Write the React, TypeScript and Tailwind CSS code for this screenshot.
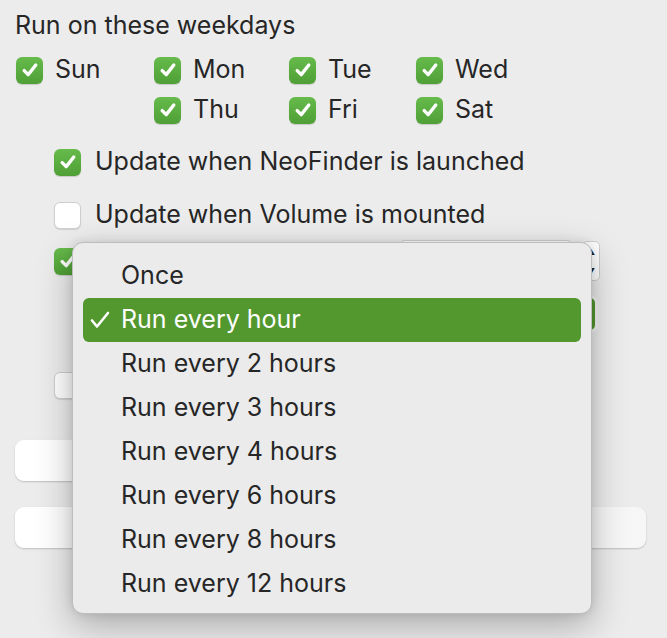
import React from "react";

const font = { fontFamily: 'Inter, "Noto Sans", sans-serif' };

function Check({ on = true }: { on?: boolean }) {
  if (!on) {
    return (
      <div className="w-[27px] h-[27px] rounded-[6px] bg-white border border-[#cfcfcf] shadow-[0_1px_1px_rgba(0,0,0,0.12)] shrink-0" />
    );
  }
  return (
    <div className="w-[27px] h-[27px] rounded-[6px] bg-gradient-to-b from-[#66bb4b] to-[#4f9f36] shadow-[0_1px_1px_rgba(0,0,0,0.15)] flex items-center justify-center shrink-0">
      <svg width="18" height="18" viewBox="0 0 18 18" fill="none">
        <path d="M3.2 9.6 L7.2 13.6 L14.8 4" stroke="white" strokeWidth="3.4" strokeLinecap="round" strokeLinejoin="round" />
      </svg>
    </div>
  );
}

function Day({ label }: { label: string }) {
  return (
    <div className="flex items-center gap-[12px] h-[40px]">
      <Check />
      <span>{label}</span>
    </div>
  );
}

export default function App() {
  const items = [
    "Once",
    "Run every hour",
    "Run every 2 hours",
    "Run every 3 hours",
    "Run every 4 hours",
    "Run every 6 hours",
    "Run every 8 hours",
    "Run every 12 hours",
  ];
  return (
    <div
      className="relative w-[667px] h-[638px] bg-[#ececec] text-[#262626] text-[25px] overflow-hidden"
      style={font}
    >
      <div className="pl-[15px] pt-[9px]">
        <div className="h-[32px] leading-[32px]">Run on these weekdays</div>
        <div className="grid grid-cols-[138px_135px_127px_auto] pl-[1px] mt-[9px]">
          <Day label="Sun" />
          <Day label="Mon" />
          <Day label="Tue" />
          <Day label="Wed" />
          <div />
          <Day label="Thu" />
          <Day label="Fri" />
          <Day label="Sat" />
        </div>
      </div>

      <div className="pl-[54px] mt-[15px] flex flex-col">
        <div className="flex items-center gap-[14px] h-[34px]">
          <Check />
          <span>Update when NeoFinder is launched</span>
        </div>
        <div className="flex items-center gap-[14px] h-[34px] mt-[19px]">
          <Check on={false} />
          <span>Update when Volume is mounted</span>
        </div>
        <div className="flex items-center h-[44px] mt-[7px]">
          <Check />
          <div className="ml-[320px] w-[170px] h-[42px] bg-white border border-[#d0d0d0] rounded-[3px]" />
          <div className="ml-[11px] w-[18px] h-[40px] bg-white rounded-[5px] border border-[#cfcfcf] flex flex-col items-center justify-around text-[8px] leading-none">
            <span>▲</span>
            <span>▼</span>
          </div>
        </div>
        <div className="flex items-center h-[40px] mt-[11px]">
          <div className="ml-[346px] w-[198px] h-[38px] rounded-[8px] bg-[#53972f] border-[3px] border-[#f4f4f4]" />
        </div>
        <div className="flex items-center h-[28px] mt-[37px]">
          <Check on={false} />
        </div>
      </div>

      <div className="px-[15px] mt-[41px] flex flex-col gap-[26px]">
        <div className="w-[520px] h-[41px] rounded-[9px] bg-gradient-to-r from-white to-[#f6f6f6] shadow-[0_1px_2px_rgba(0,0,0,0.2)]" />
        <div className="w-[631px] h-[41px] rounded-[9px] bg-gradient-to-r from-white to-[#f6f6f6] shadow-[0_1px_2px_rgba(0,0,0,0.2)]" />
      </div>

      <div className="absolute left-[72px] top-[242px] w-[520px] h-[372px] rounded-[11px] bg-[#ebebeb] border border-[#bdbdbd] shadow-[0_12px_36px_rgba(0,0,0,0.28),0_0_10px_rgba(0,0,0,0.1)] pt-[11px] px-[10px]">
        {items.map((t, i) => {
          const sel = i === 1;
          return (
            <div
              key={t}
              className={
                "h-[44px] flex items-center rounded-[6px] " +
                (sel ? "bg-[#53972f] text-white" : "")
              }
            >
              <span className="w-[38px] flex justify-end pr-[11px]">
                {sel ? (
                  <svg width="20" height="18" viewBox="0 0 20 18" fill="none">
                    <path d="M2 9.5 L7 15.5 L18 2" stroke="white" strokeWidth="2.6" strokeLinecap="round" strokeLinejoin="round" />
                  </svg>
                ) : null}
              </span>
              <span>{t}</span>
            </div>
          );
        })}
      </div>
    </div>
  );
}
